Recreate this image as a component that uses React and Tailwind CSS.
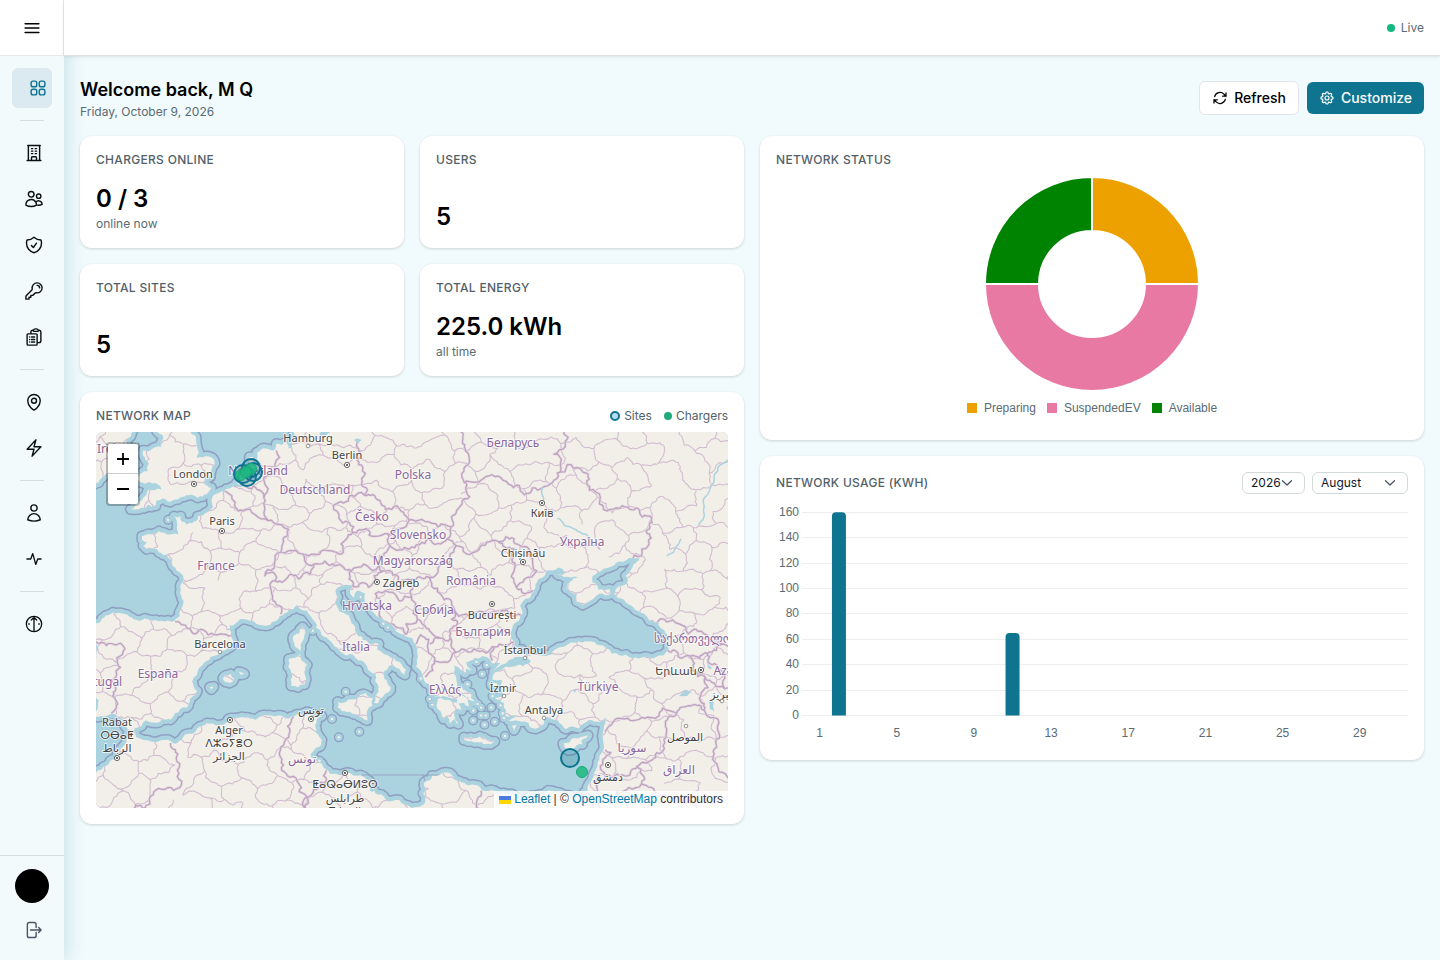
import React from "react";
import {
  HiOutlineSquares2X2,
  HiOutlineBuildingOffice,
  HiOutlineUsers,
  HiOutlineShieldCheck,
  HiOutlineKey,
  HiOutlineClipboardDocumentList,
  HiOutlineMapPin,
  HiOutlineBolt,
  HiOutlineUser,
  HiOutlineArrowPath,
  HiOutlineCog8Tooth,
  HiOutlineArrowRightOnRectangle,
  HiOutlineBars3,
} from "react-icons/hi2";

/* ---------- Map geometry: "lon lat lon lat ..." strings, Web Mercator at zoom 4 ---------- */

const MAP_W = 632;
const MAP_H = 376;

const project = (lon, lat) => [
  99.5 + 11.378 * lon,
  737.9 - 651.9 * Math.log(Math.tan(Math.PI / 4 + (lat * Math.PI) / 360)),
];

const noise = (a, b) => {
  const s = Math.sin(a * 12.9898 + b * 78.233) * 43758.5453;
  return (s - Math.floor(s)) * 2 - 1;
};

function roughen(a, b, amount, out) {
  const dx = b[0] - a[0];
  const dy = b[1] - a[1];
  const len = Math.hypot(dx, dy);
  if (len < 4 || len > 300) {
    out.push(b);
    return;
  }
  const k = noise(a[0] + b[0], a[1] + b[1]) * amount;
  const mid = [(a[0] + b[0]) / 2 - dy * k, (a[1] + b[1]) / 2 + dx * k];
  roughen(a, mid, amount, out);
  roughen(mid, b, amount, out);
}

function toPath(points, amount, close) {
  const out = [points[0]];
  for (let i = 1; i < points.length; i++) roughen(points[i - 1], points[i], amount, out);
  return "M" + out.map((p) => p[0].toFixed(1) + " " + p[1].toFixed(1)).join("L") + (close ? "Z" : "");
}

function geo(text, amount, close) {
  const n = text.trim().split(/\s+/).map(Number);
  const pts = [];
  for (let i = 0; i < n.length; i += 2) pts.push(project(n[i], n[i + 1]));
  return toPath(pts, amount, close);
}

const MAINLAND = `8.1 56 8.1 55.5 8.6 55 8.9 54.4 8.6 54.3 8.9 54.05 9 53.9 8.5 53.85 8.5 53.55 8.2 53.4 8 53.7
7.1 53.65 7 53.35 6.2 53.4 5.4 53.2 5.4 52.85 5.8 52.6 5.2 52.4 5.05 52.7 5.05 52.95 4.75 52.95 4.5 52.4 4.1 52
3.6 51.55 4.2 51.4 3.5 51.4 2.5 51.1 1.6 50.9 1.55 50.2 1.1 49.95 .2 49.7 .1 49.45 -.3 49.3 -1.2 49.4 -1.3 49.7
-1.9 49.7 -1.6 49.2 -1.55 48.65 -2.5 48.65 -3.2 48.85 -4.7 48.55 -4.7 48.35 -4.3 48.2 -4.6 48 -4.3 47.8 -3.2 47.6
-2.5 47.5 -2.2 47.2 -2 46.8 -1.2 46.3 -1.1 45.8 -1.2 44.8 -1.5 43.6 -1.9 43.35 -3 43.4 -4 43.45 -5.8 43.65
-7.7 43.75 -8.3 43.4 -9.2 43.1 -8.8 42.1 -8.7 41 -9 39.6 -9.5 38.75 -8.8 38.4 -8.8 37 -7.9 37 -7.3 37.2 -6.4 36.8
-6.2 36.3 -5.6 36 -5.3 36.15 -4.4 36.7 -3 36.75 -2.2 36.75 -1.8 37.2 -.8 37.6 -.5 38.2 .15 38.75 -.3 39.4 .3 40.3
.9 40.75 2.1 41.3 3.2 41.9 3.1 42.5 3 43.1 3.9 43.5 4.8 43.4 6 43.1 6.7 43.3 7.4 43.7 8.2 44.1 8.9 44.4 9.8 44.05
10.3 43.5 10.6 42.95 11.2 42.4 12.2 41.75 13 41.25 13.8 41.2 14.3 40.8 14.9 40.6 15.3 40.1 15.8 39.9 16.1 39
15.9 38.5 15.7 37.95 16.1 37.95 16.6 38.5 17.15 39 16.6 39.6 16.6 40.1 17 40.45 17.9 40.25 18.4 39.85 18.5 40.2
17.9 40.7 16.9 41.15 16 41.5 16.1 41.9 15.3 41.9 14.2 42.5 13.6 43.5 12.6 44 12.3 44.5 12.5 44.9 12.3 45.3
13.2 45.65 13.8 45.6 13.6 45.1 13.9 44.85 14.3 45.3 14.9 45.1 15.2 44.3 15.9 43.7 16.5 43.5 17.4 43 18.5 42.4
19.4 41.85 19.5 41.3 19.4 40.4 20 39.7 20.7 39 21.1 38.35 22 38.35 23 38.2 23 37.95 22.2 38.15 21.3 38.2 21.2 37.8
21.6 37.2 21.8 36.8 22.1 37 22.4 36.5 22.8 36.8 23.1 36.45 22.8 37.5 23.4 37.4 23.1 37.9 24 37.7 24 38.3 23 38.8
23 39.3 22.7 40 22.7 40.5 23.3 40.2 23.7 39.95 23.8 40.25 24.3 40.15 23.8 40.7 24.5 40.95 25.9 40.85 26.1 40.6
26.8 40.65 26.2 40.05 26.7 40.4 27.4 40.7 28 41 28.95 41 29.05 41.2 28.1 41.6 27.8 42.4 27.6 42.6 27.9 43.1
28.5 43.5 28.6 44.2 29 44.8 29.7 45.2 30 45.8 30.8 46.5 31.9 46.7 32.5 46.4 31.8 46.3 33 46.1 33.6 46.1 32.6 45.4
33.5 45.1 33.5 44.6 34 44.4 35 44.8 35.5 45.1 36.5 45.1 36.4 45.4 35.4 45.35 34.9 45.8 34.9 46.2 35.3 46.4
36.5 46.75 37.6 47.05 39 47.25 38.5 46.9 38.2 46.5 37.8 46.2 38 45.9 37.6 45.6 36.9 45.35 36.8 45.1 37.4 44.8
38.2 44.4 39.2 43.9 39.9 43.4 41.2 42.8 41.6 42.2 41.6 41.6 40.5 41.05 39.5 41.05 38.4 40.95 37.2 41.15 36.5 41.3
36 41.7 35.1 42 34 42 33.3 42 32.2 41.7 31.3 41.2 30.2 41.15 29.15 41.2 29 40.95 29.5 40.75 28.8 40.4 27.9 40.4
27.3 40.4 26.3 40 26.1 39.5 26.9 39.5 26.8 38.9 27.1 38.4 26.3 38.3 27.1 37.9 27.3 37.4 27.3 37 28.2 37 27.5 36.7
28.2 36.7 29.1 36.6 29.7 36.15 30.4 36.3 30.6 36.85 31.3 36.8 32 36.5 32.6 36.1 33.7 36.15 34.6 36.75 35.5 36.6
36.1 36.9 35.9 36.3 35.75 35.6 35.9 34.8 35.5 33.9 35.1 33 34.9 32.5 34.5 31.6 34 31.2 32.3 31.3 31 31.6 30 31.25
29 30.85 27.3 31.35 25.2 31.6 24 32 23.2 32.3 22.5 32.8 21.7 32.9 20.8 32.7 20.1 32.2 20 31.4 20.2 30.8 19 30.3
17.9 30.9 16 31.3 15.3 31.6 15.3 32.3 14.2 32.7 13 32.85 11.5 33.15 11.1 33.6 10.2 34 10.1 34.3 10.8 34.8
11.1 35.3 10.6 35.8 10.5 36.35 11.1 37 10.3 36.85 10.2 37.2 9.8 37.3 8.6 36.95 7.2 37.05 6.3 37.05 5.3 36.75
3.9 36.9 2.9 36.8 1 36.5 0 35.9 -.7 35.75 -1.3 35.3 -2 35.1 -2.95 35.3 -3.9 35.2 -5.2 35.5 -5.3 35.9 -5.9 35.8
-6.3 34.9 -6.85 34 -7.6 33.6 -8.6 33.1 -9.3 32.5 -9.8 31.5 -10 29 50 29 50 56`;

const ISLANDS = [
  `-5.7 50.1 -5 50.1 -4.2 50.35 -3.5 50.3 -3.4 50.6 -2.9 50.7 -2 50.6 -1.1 50.8 .2 50.75 1 50.95 1.4 51.3 .7 51.5
  1.3 51.9 1.7 52.6 1.3 52.95 .4 52.95 .1 52.9 .3 53.2 .1 53.6 -.1 54.1 -.6 54.5 -.6 55.5 -3.5 55.5 -3.6 54.9
  -3.4 54.3 -2.9 54.1 -3 53.5 -4.1 53.25 -4.6 53.3 -4.4 52.8 -4.1 52.6 -4.2 52.2 -5.2 51.85 -4.9 51.6 -4 51.6
  -3.1 51.4 -3 51.2 -4.2 51.15 -4.6 50.75 -5.3 50.3 -5.7 50.1`,
  "-6.3 52.2 -6 53 -6.1 53.5 -5.5 54.4 -6 55 -10 55 -10.5 52 -9.7 51.5 -8.3 51.8 -6.3 52.2",
  "8.2 40.9 9.2 41.25 9.8 40.5 9.6 39.2 9 39 8.4 39.1 8.5 39.9 8.2 40.9",
  "8.6 42.4 9.4 43 9.5 42.2 9.2 41.4 8.7 41.8 8.6 42.4",
  "12.5 38 13.4 38.15 15.6 38.25 15.1 37.4 15.1 36.7 14.2 37.1 12.5 37.6 12.5 38",
  "2.4 39.6 3.1 39.9 3.4 39.6 3 39.3 2.4 39.6",
  "3.8 40.05 4.3 39.9 4 39.85 3.8 40.05",
  "1.25 39 1.6 39.05 1.4 38.85 1.25 39",
  "23.6 35.5 24.2 35.5 25.7 35.3 26.3 35.2 25.5 35 24 35.2 23.6 35.3 23.6 35.5",
  "32.3 35.05 32.9 35.15 33 35.35 34.5 35.65 33.9 35.25 34 35 33.1 34.6 32.5 34.7 32.3 35.05",
  "23.1 38.95 23.4 39 24.2 38.6 24.5 38 24.2 38.1 23.7 38.4 23.1 38.95",
  "26 39.3 26.5 39.3 26.5 39 26 39.15 26 39.3",
  "27.8 36.3 28.2 36.4 28 36 27.8 36.3",
];

const ISLETS = `26.1 38.4 26.8 37.75 27.1 36.85 25.5 37.05 25.1 37.05 24.8 37.85 25.1 37.6 24.4 36.7 25.4 36.4 27.2 35.6
19.8 39.6 20.6 38.2 20.8 37.8 25.2 39.9 24.7 40.7 14.4 35.9 12 36.8 12.6 35.5 14.9 38.5 13.2 38.7 24.4 37.4 26.3 36.6
26 37.6 27 37.2 23.9 39.2 25.6 40.5 10.3 42.75 -2.4 49.5 16.5 43.2 16.9 42.95 14.5 44.9 14.9 44.5 20.7 38.7 10.9 33.8`
  .trim()
  .split(/\s+/)
  .map(Number);

const BORDERS = [
  "-1.8 43.35 -.7 42.9 .7 42.8 1.7 42.5 3.1 42.45",
  "-8.8 42.05 -8.2 42 -6.6 41.95 -6.2 41.6 -6.9 41 -7 39.7 -7.4 39.4 -7 38.9 -7.3 38.4 -7 38.1 -7.4 37.2",
  "2.55 51.1 3.2 50.7 4.2 50 4.8 50.1 5.8 49.55 6.4 49.45 8.2 48.95",
  "8.2 48.95 7.6 48 7.5 47.6 7 47.4 6.1 46.2 7 46.3 7 45.9 6.7 45.1 7 44.6 7.6 44.1 7.5 43.8",
  "7.6 47.6 9.5 47.5 9.6 47.1 10.4 46.9 10.1 46.3 9.1 46 8.4 46.3 7.8 45.9 7 45.9",
  "3.4 51.35 4.3 51.4 5.1 51.4 5.8 51.1 6 50.75 6.1 50.1 6.4 49.45",
  "6 50.75 6.2 51.4 6 51.85 6.9 52.1 7 52.6 7.1 53.3",
  "14.3 53.9 14.4 53.2 14.2 52.8 14.7 52.4 14.6 51.8 15 51.3 14.8 50.9",
  "14.8 50.9 14.3 51 13 50.45 12.1 50.3 12.6 49.6 13.8 48.75 15 49 16.9 48.7 17.9 49 18.8 49.5 17.7 50.3 16.7 50.1 16.2 50.6 14.8 50.9",
  "16.9 48.7 17.1 48 18.8 47.8 20.5 48.4 22.1 48.4 22.5 49.1 20.2 49.4 18.8 49.5",
  "9.6 47.5 10.4 47.5 12.2 47.65 13 47.6 12.8 48.1 13.8 48.75",
  "10.4 46.9 12.3 46.8 13.7 46.5 16 46.7 16.2 47.4 17.1 48",
  "13.7 46.5 13.5 46 13.8 45.6",
  "16.1 46.85 16.5 46.5 18 45.8 18.9 45.95 20.3 46.15 21.3 46.4 22.9 48 22.1 48.4",
  "13.6 45.5 15.2 45.5 15.7 46.2 16.5 46.5",
  "18.5 42.5 17.6 43 16.2 44.2 15.8 45.1 17 45.2 19 44.9 19.3 44.3 19.5 43.5 18.5 43.2 18.5 42.5",
  "19 44.9 19.1 45.4 18.9 45.95",
  "20.3 46.15 21.5 45.1 22.5 44.6 22.7 44.2 22.5 43.5 23 43.2 22.4 42.3 21.5 42.3 20.6 41.9",
  "19.5 43.5 20.3 42.9 21.5 42.3",
  "19.4 41.9 19.8 42.5 20.5 42.2 20.5 41.3 21 40.8 20.2 39.7",
  "21 40.8 22.9 41.35 25 41.4 26.3 41.7 26.1 40.8",
  "22.9 41.35 22.4 42.3",
  "26.3 41.7 28 42",
  "22.7 44.2 24 43.7 26 43.9 27.3 44.1 28.6 43.75",
  "22.9 48 24.9 47.75 26.6 48.25 28.1 46.8 28.2 45.5 29.7 45.3",
  "26.6 48.25 28 48.4 29.2 47.9 30 46.5 28.9 46 28.2 45.5",
  "22.5 49.1 22.9 49.9 24.1 50.8 23.6 51.6 23.6 52.2 23.9 53.2 23.5 54 22.8 54.4",
  "23.6 51.6 25.5 51.9 27.5 51.5 30.5 51.3 31.8 52.1 31.5 53.1 32.5 53.5 30.8 54.8",
  "31.8 52.1 33.8 52.35 34.4 51.5 35.5 50.4 37.5 50.3 40.1 49.6 39.8 48 38.2 47.1",
  "40 43.4 42.5 43.2 44.5 42.7 46.4 41.9 48 41.5",
  "41.5 41.5 43.5 41.1 45 41.3 46.4 41.9",
  "43.5 41.1 43.7 40.1 44.8 39.7 46.5 38.9 48 39.5",
  "45 41.3 45.6 40.6 46.5 39.6 46.5 38.9",
  "44.8 39.7 44.4 38.4 44.8 37.3",
  "36 35.9 36.7 36.6 38 36.85 40 36.9 42.3 37.2 44.8 37.3",
  "44.8 37.3 46 35.8 45.5 34.5 46 33 47.5 31.5",
  "42.3 37.2 41.3 36.3 41.2 34.7 38.8 33.4 36 32.6 35.6 33.2 36.5 34.4 36 34.6",
  "38.8 33.4 39.2 32.1 37 31.5 38 30.4",
  "39.2 32.1 42 31.1 44.7 29.2",
  "34.2 31.3 34.9 29.5",
  "35.5 32.7 35.5 31 34.9 29.5",
  "25.1 31.6 24.9 30.2 25 29",
  "11.5 33.1 11.5 32.3 10.2 31.3 9.5 30.2",
  "8.6 36.95 8.2 35.5 7.6 33.9 8.3 32.6 9.1 32.1 9.5 30.2 9.5 29",
  "-2.2 35.1 -1.7 34 -1.2 32.3 -3 31.7 -4 30.6 -6 29.6",
];

/* Province outlines: an irregular honeycomb laid over the land. */
function provinces() {
  const cw = 17;
  const ch = 21;
  const at = (i, j) => [
    i * cw + noise(i + 3, j + 11) * 6 - 10,
    j * ch + ((i + j) % 2 ? 4 : -4) + noise(i + 29, j + 5) * 6 - 10,
  ];
  const parts = [];
  for (let j = 0; j < 21; j++) {
    for (let i = 0; i < 41; i++) {
      if (noise(i * 3 + 1, j * 7 + 2) < 0.8) parts.push(toPath([at(i, j), at(i + 1, j)], 0.22));
      if ((i + j) % 2 && noise(i + 90, j) < 0.75) parts.push(toPath([at(i, j), at(i, j + 1)], 0.22));
    }
  }
  return parts.join("");
}

const LAND_PATH =
  geo(MAINLAND, 0.2, true) + ISLANDS.map((d) => geo(d, 0.2, true)).join("");
const BORDER_PATH = BORDERS.map((d) => geo(d, 0.3, false)).join("");
const PROVINCE_PATH = provinces();
const LAKES = [
  "10.9 54.6 10.9 54 11.5 54.1 12.3 54.35 12.5 54.6",
  "14 53.9 14.6 53.85 14.3 53.65 14 53.8",
  "42.5 38.4 43 38.8 43.6 38.7 43.2 38.4 42.5 38.4",
  "45.1 38.1 45.5 38.1 45.6 37.3 45.2 37.5 45.1 38.1",
  "45 40.6 45.4 40.3 45.2 40.2 45 40.6",
  "33.2 38.9 33.5 38.8 33.3 38.6",
].map((d) => geo(d, 0.15, true)).join("");
const RIVERS = [
  "31.8 49.6 32.4 49.2 33.2 49 34 48.7 34.6 48.5",
  "30.5 51.3 30.6 50.6",
  "41.4 47.4 42 47.6 42.3 48 42.7 48.4",
  "44.2 49.2 44.7 50.2 45.2 51.2 45.6 52 46.8 52.8",
].map((d) => geo(d, 0.15, false)).join("");

const COUNTRIES = [
  [162, 43, "Nederland"], [219, 62, "Deutschland"], [317, 47, "Polska"], [417, 15, "Беларусь"],
  [276, 89, "Česko"], [322, 107, "Slovensko"], [317, 133, "Magyarország"], [120, 138, "France"],
  [375, 153, "România"], [271, 178, "Hrvatska"], [338, 182, "Србија"], [387, 204, "България"],
  [486, 114, "Україна"], [260, 219, "Italia"], [62, 246, "España"], [2, 254, "Portugal"],
  [349, 262, "Ελλάς"], [502, 259, "Türkiye"], [206, 331, "تونس"], [597, 211, "საქართველო"],
  [650, 243, "Azərbaycan"], [536, 320, "سوريا"], [583, 342, "العراق"], [21, 21, "Ireland"],
];
const CITIES = [
  [212, 10, "Hamburg", 212, 14, 0], [251, 27, "Berlin", 251, 33, 1], [97, 46, "London", 98, 52, 1],
  [126, 93, "Paris", 126, 99, 1], [305, 155, "Zagreb", 281, 150, 1], [396, 187, "București", 396, 172, 1],
  [429, 222, "İstanbul", 429, 226, 0], [446, 85, "Київ", 446, 71, 1], [427, 125, "Chișinău", 427, 130, 1],
  [124, 216, "Barcelona", 124, 220, 0], [407, 260, "İzmir", 408, 264, 0], [448, 282, "Antalya", 448, 286, 0],
  [21, 294, "Rabat", 21, 326, 1], [21, 307, "ⵔⴱⴰⵟ"], [21, 320, "الرباط"],
  [133, 302, "Alger", 134, 288, 1], [133, 315, "ⴷⵣⴰⵢⴻⵔ"], [133, 328, "الجزائر"],
  [215, 282, "تونس", 215, 287, 1], [249, 356, "ⵟⴰⵕⴰⴱⵍⵓⵙ", 249, 341, 1], [249, 370, "طرابلس"], [249, 383, "Tripoli"],
  [580, 243, "Երևան", 605, 238, 1], [625, 266, "تبریز", 626, 269, 0], [589, 309, "الموصل", 590, 294, 0],
  [512, 349, "دمشق", 512, 333, 1],
];

const SITE_MARKERS = [[147, 42], [151, 45], [155, 36], [157, 40], [474, 326]];
const CHARGER_MARKERS = [[145, 43], [155, 37], [150, 40], [486, 340]];

function MapCanvas() {
  return (
    <svg
      viewBox={`0 0 ${MAP_W} ${MAP_H}`}
      preserveAspectRatio="xMidYMid slice"
      className="block h-full w-full"
      role="img"
      aria-label="Map of sites and chargers"
    >
      <defs>
        <clipPath id="land">
          <path d={LAND_PATH} />
        </clipPath>
      </defs>
      <rect width={MAP_W} height={MAP_H} fill="#aad3df" />
      <g strokeLinejoin="round">
        <g stroke="#8f9fc2" strokeWidth="11.5" fill="none">
          <path d={LAND_PATH} />
          {ISLETS.map((v, i) => {
            if (i % 2) return null;
            const [x, y] = project(v, ISLETS[i + 1]);
            return <circle key={i} cx={x} cy={y} r="1" strokeWidth="8" />;
          })}
        </g>
        <g stroke="#aad3df" strokeWidth="8.5" fill="none">
          <path d={LAND_PATH} />
          {ISLETS.map((v, i) => {
            if (i % 2) return null;
            const [x, y] = project(v, ISLETS[i + 1]);
            return <circle key={i} cx={x} cy={y} r="1" strokeWidth="5.5" />;
          })}
        </g>
      </g>
      <path d="M265 343H346M346 343L352 363L338 376M327 343L334 362" fill="none" stroke="#95a5c6" />
      <path d={LAND_PATH} fill="#f2efe9" />
      <g fill="#f2efe9">
        {ISLETS.map((v, i) => {
          if (i % 2) return null;
          const [x, y] = project(v, ISLETS[i + 1]);
          return <circle key={i} cx={x} cy={y} r="1.3" />;
        })}
      </g>
      <g clipPath="url(#land)" fill="none" strokeLinejoin="round">
        <path d={PROVINCE_PATH} stroke="#d2bdd0" strokeWidth="1.1" />
        <path d={BORDER_PATH} stroke="#e3d6e0" strokeWidth="2.6" />
        <path d={BORDER_PATH} stroke="#bda2bf" strokeWidth="1.2" />
      </g>
      <path d={LAKES} fill="#aad3df" />
      <path d={RIVERS} fill="none" stroke="#aad3df" strokeWidth="1.5" />

      <g
        fontFamily='"Noto Sans", "DejaVu Sans", sans-serif'
        fontSize="11"
        textAnchor="middle"
        stroke="#ffffff"
        strokeOpacity="0.7"
        strokeWidth="2"
        strokeLinejoin="round"
        paintOrder="stroke"
      >
        <g fill="#8a679b" fontSize="12">
          {COUNTRIES.map(([x, y, t]) => (
            <text key={t + x} x={x} y={y}>{t}</text>
          ))}
        </g>
        <g fill="#444444">
          {CITIES.map(([x, y, t]) => (
            <text key={t + x} x={x} y={y}>{t}</text>
          ))}
        </g>
      </g>
      <g stroke="#555555" fill="#ffffff">
        {CITIES.filter((c) => c.length > 3).map(([, , t, x, y, capital]) => (
          <g key={t}>
            <circle cx={x} cy={y} r={capital ? 2.6 : 1.8} strokeWidth={capital ? 0.9 : 0.6} />
            {capital ? <circle cx={x} cy={y} r="1.1" fill="#444444" stroke="none" /> : null}
          </g>
        ))}
      </g>

      <g fill="#0e7490" fillOpacity="0.25" stroke="#0e7490" strokeWidth="2">
        {SITE_MARKERS.map(([x, y]) => (
          <circle key={x} cx={x} cy={y} r="9" />
        ))}
      </g>
      <g fill="#1fb981" fillOpacity="0.85" stroke="#1aa974" strokeWidth="1">
        {CHARGER_MARKERS.map(([x, y]) => (
          <circle key={x} cx={x} cy={y} r="5.5" />
        ))}
      </g>
    </svg>
  );
}

/* ---------- Icons without a library twin ---------- */

function PulseIcon({ className }) {
  return (
    <svg viewBox="0 0 24 24" className={className} fill="none" stroke="currentColor" strokeWidth="1.6" strokeLinecap="round" strokeLinejoin="round" aria-hidden="true">
      <path d="M3.5 12h4.6l2.4-6.5 3.6 13 2.4-6.5h4" />
    </svg>
  );
}

function GaugeIcon({ className }) {
  return (
    <svg viewBox="0 0 24 24" className={className} fill="none" stroke="currentColor" strokeWidth="1.6" strokeLinecap="round" strokeLinejoin="round" aria-hidden="true">
      <circle cx="12" cy="12" r="9.2" />
      <path d="M12 20V4.5M8.8 7.2 12 4.2l3.2 3M5.6 12h.7M17.7 12h.7" />
    </svg>
  );
}

function Chevron({ className }) {
  return (
    <svg viewBox="0 0 12 12" className={className} fill="none" stroke="#4b5563" strokeWidth="1.3" strokeLinecap="round" strokeLinejoin="round" aria-hidden="true">
      <path d="M1.5 3.8 6 8l4.5-4.2" />
    </svg>
  );
}

/* ---------- Layout ---------- */

const NAV_GROUPS = [
  [
    ["Organizations", HiOutlineBuildingOffice],
    ["Users", HiOutlineUsers],
    ["Roles", HiOutlineShieldCheck],
    ["Keys", HiOutlineKey],
    ["Reports", HiOutlineClipboardDocumentList],
  ],
  [
    ["Sites", HiOutlineMapPin],
    ["Chargers", HiOutlineBolt],
  ],
  [
    ["Drivers", HiOutlineUser],
    ["Sessions", PulseIcon],
  ],
  [["Firmware", GaugeIcon]],
];

function Sidebar() {
  return (
    <aside className="z-10 flex w-16 shrink-0 flex-col bg-[#f3fafc] shadow-[4px_0_16px_rgba(14,116,144,0.16)]">
      <div className="flex h-14 items-center justify-center border-r border-b border-[#e6eaec] bg-white">
        <button type="button" aria-label="Toggle menu" className="text-black">
          <HiOutlineBars3 className="size-5" strokeWidth={1.8} />
        </button>
      </div>
      <nav className="flex flex-1 flex-col px-3 pt-3">
        <a href="#dashboard" aria-label="Dashboard" className="flex h-10 items-center justify-end rounded-md bg-[#dbe9f1] pr-1 text-[#0e7490]">
          <HiOutlineSquares2X2 className="size-5" strokeWidth={1.7} />
        </a>
        {NAV_GROUPS.map((group, i) => (
          <div key={i}>
            <div className="mx-2 my-3 h-px bg-[#d5dee1]" />
            <div className="flex flex-col gap-1.5">
              {group.map(([label, Icon]) => (
                <a key={label} href={"#" + label.toLowerCase()} aria-label={label} className="flex h-10 items-center justify-center pl-1 text-[#0b0f12]">
                  <Icon className="size-5" strokeWidth={1.7} />
                </a>
              ))}
            </div>
          </div>
        ))}
      </nav>
      <div className="flex flex-col items-center gap-[17px] border-t border-[#d5dee1] pt-[13px] pb-5">
        <button type="button" aria-label="Account" className="size-[34px] rounded-full bg-black" />
        <button type="button" aria-label="Sign out" className="pl-0.5 text-[#4b5563]">
          <HiOutlineArrowRightOnRectangle className="size-5" strokeWidth={1.7} />
        </button>
      </div>
    </aside>
  );
}

const CARD = "rounded-xl bg-white p-4 shadow-[0_1px_3px_rgba(0,0,0,0.16)]";
const CARD_TITLE = "text-xs leading-4 font-medium tracking-wide text-[#526169] uppercase";

function StatCard({ title, value, note, className }) {
  return (
    <section className={CARD + " flex flex-col justify-between " + className}>
      <h2 className={CARD_TITLE}>{title}</h2>
      <div>
        <p className="text-2xl leading-[30px] font-semibold text-black">{value}</p>
        {note ? <p className="mt-0.5 text-xs leading-4 text-[#5b6b73]">{note}</p> : null}
      </div>
    </section>
  );
}

function MapCard() {
  return (
    <section className={CARD + " col-span-2 col-start-1 row-span-7 row-start-5 flex flex-col gap-2"}>
      <div className="flex items-center justify-between">
        <h2 className={CARD_TITLE}>Network map</h2>
        <div className="flex items-center gap-3 text-xs leading-4 text-[#526169]">
          <span className="flex items-center gap-1">
            <span className="size-2.5 rounded-full border-2 border-[#0e7490] bg-[#b9ddf0]" />
            Sites
          </span>
          <span className="flex items-center gap-1">
            <span className="size-2 rounded-full bg-[#1fab78]" />
            Chargers
          </span>
        </div>
      </div>
      <div className="relative min-h-0 flex-1 overflow-hidden rounded-md">
        <MapCanvas />
        <div className="absolute top-2.5 left-2.5 flex w-[34px] flex-col overflow-hidden rounded border-2 border-black/25 bg-white bg-clip-padding text-black">
          <button type="button" aria-label="Zoom in" className="flex h-[30px] items-center justify-center border-b border-[#cccccc]">
            <svg viewBox="0 0 12 12" className="size-3" stroke="currentColor" strokeWidth="1.8" aria-hidden="true">
              <path d="M0 6h12M6 0v12" />
            </svg>
          </button>
          <button type="button" aria-label="Zoom out" className="flex h-[30px] items-center justify-center">
            <svg viewBox="0 0 12 12" className="size-3" stroke="currentColor" strokeWidth="1.8" aria-hidden="true">
              <path d="M0 6h12" />
            </svg>
          </button>
        </div>
        <div className="absolute right-0 bottom-0 flex items-center bg-white/80 px-[5px] font-['Liberation_Sans',Arial,sans-serif] text-xs leading-[17px] whitespace-pre text-[#333333]">
          <svg viewBox="0 0 12 8" className="mr-[3px] h-2 w-3" aria-hidden="true">
            <path fill="#4c7be1" d="M0 0h12v4H0z" />
            <path fill="#ffd500" d="M0 4h12v4H0z" />
          </svg>
          <a href="https://leafletjs.com" className="text-[#0078a8]">Leaflet</a>
          {" | © "}
          <a href="https://www.openstreetmap.org/copyright" className="text-[#0078a8]">OpenStreetMap</a>
          {" contributors"}
        </div>
      </div>
    </section>
  );
}

const STATUSES = [
  ["Preparing", "bg-[#eca100]"],
  ["SuspendedEV", "bg-[#e879a2]"],
  ["Available", "bg-[#008300]"],
];

function StatusCard() {
  return (
    <section className={CARD + " col-span-2 col-start-3 row-span-5 row-start-1 flex flex-col items-center"}>
      <h2 className={CARD_TITLE + " self-start"}>Network status</h2>
      <svg viewBox="0 0 216 216" className="mt-2 size-[216px]" role="img" aria-label="Chargers by status">
        <g stroke="#ffffff" strokeWidth="2">
          <path fill="#eca100" d="M108 1a107 107 0 0 1 107 107h-54a53 53 0 0 0-53-53z" />
          <path fill="#e879a2" d="M215 108a107 107 0 0 1-214 0h54a53 53 0 0 0 106 0z" />
          <path fill="#008300" d="M1 108a107 107 0 0 1 107-107v54a53 53 0 0 0-53 53z" />
        </g>
      </svg>
      <ul className="mt-2 flex gap-[11px] font-['Liberation_Sans',Arial,sans-serif] text-xs leading-4 text-[#5b6b73]">
        {STATUSES.map(([label, color]) => (
          <li key={label} className="flex items-center gap-[7px]">
            <span className={"size-2.5 " + color} />
            {label}
          </li>
        ))}
      </ul>
    </section>
  );
}

const Y_TICKS = [160, 140, 120, 100, 80, 60, 40, 20, 0];
const X_TICKS = [1, 5, 9, 13, 17, 21, 25, 29];
const USAGE = [[2, 160], [11, 65]];
const dayX = (day) => 34 + (day - 0.5) * 19.29;
const kwhY = (kwh) => 211 - kwh * 1.27;

function UsageChart() {
  return (
    <svg viewBox="0 0 632 242" className="block w-full" role="img" aria-label="Daily energy use in kWh">
      <g stroke="#eceeef" strokeWidth="1">
        {Y_TICKS.map((t) => (
          <path key={t} d={`M26 ${Math.round(kwhY(t)) + 0.5}H632`} />
        ))}
      </g>
      <g fontFamily='"Liberation Sans", Arial, sans-serif' fontSize="12" fill="#5b6b73">
        {Y_TICKS.map((t) => (
          <text key={t} x="23" y={Math.round(kwhY(t)) + 4} textAnchor="end">{t}</text>
        ))}
        {X_TICKS.map((t) => (
          <text key={t} x={dayX(t)} y="233" textAnchor="middle">{t}</text>
        ))}
      </g>
      <g fill="#0e7490">
        {USAGE.map(([day, kwh]) => {
          const x = dayX(day) - 7;
          const y = kwhY(kwh) + 0.5;
          return <path key={day} d={`M${x} 211.5V${y + 4}a4 4 0 0 1 4-4h6a4 4 0 0 1 4 4V211.5z`} />;
        })}
      </g>
    </svg>
  );
}

const SELECT =
  "block h-[22px] appearance-none rounded-md border border-[#d3d8db] bg-white pl-2 text-xs text-[#111827]";

function UsageCard() {
  return (
    <section className={CARD + " col-span-2 col-start-3 row-span-5 row-start-6"}>
      <div className="flex items-center justify-between">
        <h2 className={CARD_TITLE}>Network usage (kWh)</h2>
        <div className="flex gap-[7px]">
          <div className="relative">
            <select aria-label="Year" defaultValue="2026" className={SELECT + " w-[63px]"}>
              <option>2026</option>
              <option>2025</option>
            </select>
            <Chevron className="pointer-events-none absolute top-[5px] right-3 size-3" />
          </div>
          <div className="relative">
            <select aria-label="Month" defaultValue="August" className={SELECT + " w-24"}>
              <option>July</option>
              <option>August</option>
              <option>September</option>
            </select>
            <Chevron className="pointer-events-none absolute top-[5px] right-3 size-3" />
          </div>
        </div>
      </div>
      <div className="mt-2.5">
        <UsageChart />
      </div>
    </section>
  );
}

export default function App() {
  return (
    <div className="flex min-h-screen bg-[#f1fafc] font-['Inter',sans-serif] antialiased">
      <Sidebar />
      <div className="flex min-w-0 flex-1 flex-col">
        <header className="relative z-20 flex h-14 items-center justify-end border-b border-[#dde1e3] bg-white px-4 shadow-[0_1px_3px_rgba(0,0,0,0.1)]">
          <span className="flex items-center gap-1.5 text-xs text-[#5b6b73]">
            <span className="size-2 rounded-full bg-[#10b981]" />
            Live
          </span>
        </header>
        <main className="p-4">
          <div className="flex items-center justify-between pt-1 pb-4">
            <div>
              <h1 className="text-lg leading-7 font-semibold text-black">Welcome back, M Q</h1>
              <p className="text-xs leading-4 text-[#5b6b73]">Friday, October 9, 2026</p>
            </div>
            <div className="flex items-center gap-2">
              <button type="button" className="flex h-[34px] items-center gap-1.5 rounded-md border border-[#e2e6e8] bg-white px-3 text-sm font-medium text-black">
                <HiOutlineArrowPath className="size-4" strokeWidth={1.9} />
                Refresh
              </button>
              <button type="button" className="flex h-8 items-center gap-1.5 rounded-md bg-[#0e7490] px-3 text-sm font-medium text-white">
                <HiOutlineCog8Tooth className="size-4" strokeWidth={1.8} />
                Customize
              </button>
            </div>
          </div>
          <div className="grid auto-rows-[48px] grid-cols-4 gap-4">
            <StatCard title="Chargers online" value="0 / 3" note="online now" className="col-start-1 row-span-2 row-start-1" />
            <StatCard title="Users" value="5" className="col-start-2 row-span-2 row-start-1" />
            <StatCard title="Total sites" value="5" className="col-start-1 row-span-2 row-start-3" />
            <StatCard title="Total energy" value="225.0 kWh" note="all time" className="col-start-2 row-span-2 row-start-3" />
            <MapCard />
            <StatusCard />
            <UsageCard />
          </div>
        </main>
      </div>
    </div>
  );
}
